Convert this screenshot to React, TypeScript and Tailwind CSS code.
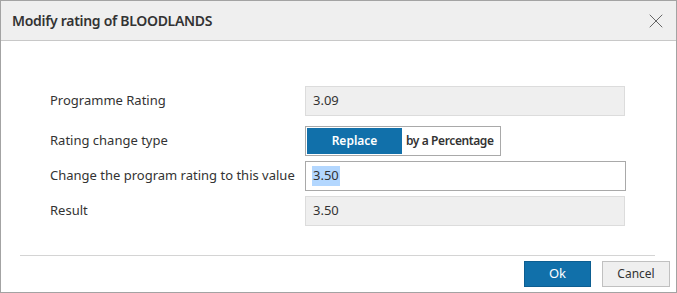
import { X } from "lucide-react";

const rows = [
  { label: "Programme Rating", kind: "readonly", value: "3.09" },
  { label: "Rating change type", kind: "toggle", value: "" },
  { label: "Change the program rating to this value", kind: "input", value: "3.50" },
  { label: "Result", kind: "readonly", value: "3.50" },
];

export default function App() {
  return (
    <div
      className="w-[677px] h-[293px] bg-white border border-[#a3a3a3] flex flex-col text-[#333]"
      style={{ fontFamily: '"Noto Sans", "Open Sans", sans-serif' }}
    >
      {/* Title bar */}
      <div className="h-[40px] shrink-0 bg-[#efefef] border-b border-[#c8c8c8] flex items-center justify-between pl-[11px] pr-[8px]">
        <span className="text-[14px] font-semibold tracking-[-0.3px] text-[#333]">Modify rating of BLOODLANDS</span>
        <X className="w-[24px] h-[24px] text-[#555]" strokeWidth={0.9} />
      </div>

      {/* Form */}
      <div className="pl-[49px] pt-[45px] flex flex-col">
        {rows.map((r, i) => (
          <div
            key={r.label}
            className={`flex items-center ${i === 1 ? "mt-[10px]" : i > 1 ? "mt-[5px]" : ""}`}
          >
            <div className="w-[255px] text-[13px]">{r.label}</div>
            {r.kind === "readonly" && (
              <div className="w-[320px] h-[30px] bg-[#efefef] border border-[#dcdcdc] flex items-center px-[7px] text-[13px]">
                {r.value}
              </div>
            )}
            {r.kind === "toggle" && (
              <div className="h-[30px] border border-[#a9a9a9] bg-white flex items-center p-[1px]">
                <div className="w-[95px] h-full bg-[#1170aa] text-white text-[12px] font-semibold flex items-center justify-center">
                  Replace
                </div>
                <div className="pl-[4px] pr-[5px] text-[12px] font-semibold text-[#333] tracking-[-0.4px]">by a Percentage</div>
              </div>
            )}
            {r.kind === "input" && (
              <div className="w-[321px] h-[30px] bg-white border border-[#a9a9a9] flex items-center px-[6px] text-[13px]">
                <span className="bg-[#b3d7ff] px-[1px]">{r.value}</span>
              </div>
            )}
          </div>
        ))}
      </div>

      {/* Footer */}
      <div className="mt-auto pb-[5px]">
        <div className="ml-[19px] mr-[21px] border-t border-[#d4d4d4]" />
        <div className="flex justify-end gap-[11px] pt-[5px] pr-[6px]">
          <button className="w-[67px] h-[26px] bg-[#1170aa] border border-[#0d5e91] text-white text-[13px]">Ok</button>
          <button className="w-[68px] h-[26px] bg-[#efefef] border border-[#c0c0c0] text-[#333] text-[12px]">Cancel</button>
        </div>
      </div>
    </div>
  );
}
